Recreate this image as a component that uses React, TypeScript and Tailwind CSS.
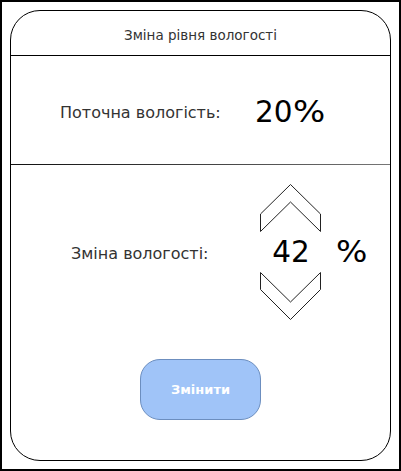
import React from "react";

function UpChevron() {
  return (
    <svg width="62" height="49" viewBox="0 0 62 49" className="block">
      <polygon
        points="30.5,0.5 0.5,30 0.5,47.5 30.5,18 60.5,47.5 60.5,30"
        fill="white"
        stroke="#222"
        strokeWidth="1"
      />
    </svg>
  );
}

function DownChevron() {
  return (
    <svg width="62" height="49" viewBox="0 0 62 49" className="block">
      <polygon
        points="0.5,0.5 30.5,30 60.5,0.5 60.5,17.5 30.5,47.5 0.5,17.5"
        fill="white"
        stroke="#222"
        strokeWidth="1"
      />
    </svg>
  );
}

export default function App() {
  const font = { fontFamily: '"DejaVu Sans", Verdana, sans-serif' };
  return (
    <div
      className="w-[401px] h-[471px] border-2 border-black bg-white p-[8px]"
      style={font}
    >
      <div className="w-full h-full border border-black rounded-[30px] flex flex-col overflow-hidden">
        <div className="h-[44px] flex items-center justify-center text-[13.5px] text-[#333] pt-[4px]">
          Зміна рівня вологості
        </div>
        <div className="h-px bg-black" />
        <div className="h-[108px] flex items-center pl-[49px] pt-[6px]">
          <span className="text-[16px] text-[#333] w-[195px]">Поточна вологість:</span>
          <span className="text-[29.5px] text-black leading-none">
            20<span className="inline-block scale-x-[1.15] origin-left">%</span>
          </span>
        </div>
        <div className="h-px bg-gradient-to-r from-[#111] to-[#777]" />
        <div className="flex-1 flex flex-col items-center">
          <div className="w-full flex items-center pt-[19px] pl-[60px]">
            <span className="text-[16px] text-[#333] w-[189px] pt-[2px]">Зміна вологості:</span>
            <div className="flex flex-col items-center w-[62px]">
              <UpChevron />
              <div className="h-[39px] flex items-center justify-center text-[29.5px] text-black leading-none pt-[1px]">
                42
              </div>
              <DownChevron />
            </div>
            <span className="ml-[14px] text-[29.5px] text-black leading-none inline-block scale-x-[1.12] origin-left">%</span>
          </div>
          <button className="mt-[38px] w-[121px] h-[61px] rounded-[20px] bg-[#a0c4f8] border border-[#6c8ebf] text-white font-bold text-[13px] flex items-center justify-center">
            Змінити
          </button>
        </div>
      </div>
    </div>
  );
}
